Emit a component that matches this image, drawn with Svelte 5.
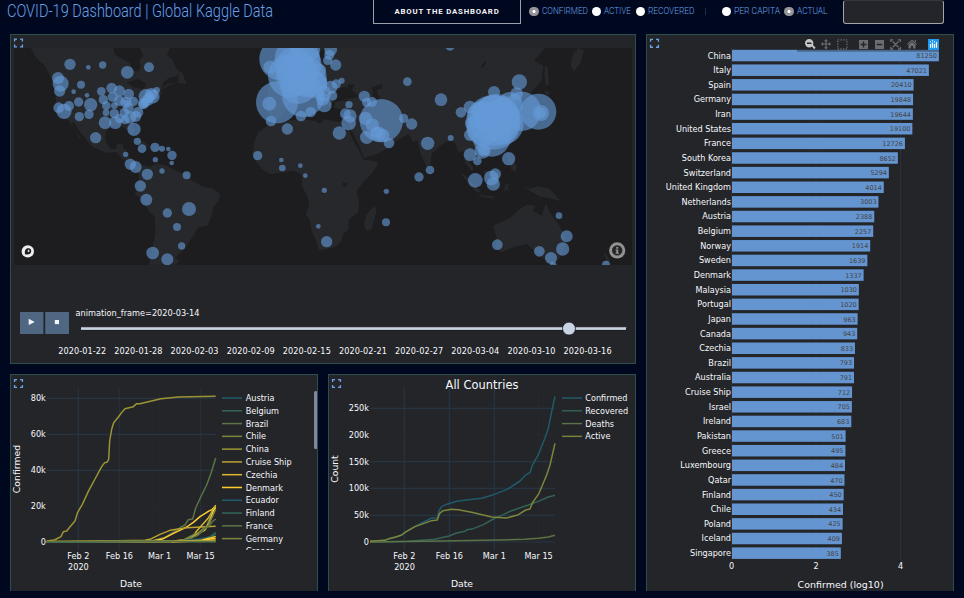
<script>
  const radiosA = [
    { label: 'CONFIRMED', w: 46, on: true },
    { label: 'ACTIVE', w: 27, on: false },
    { label: 'RECOVERED', w: 46.5, on: false }
  ];
  const radiosB = [
    { label: 'PER CAPITA', w: 46, on: false },
    { label: 'ACTUAL', w: 30.5, on: true }
  ];

  const bars = [
    ['China', 81250], ['Italy', 47021], ['Spain', 20410], ['Germany', 19848], ['Iran', 19644],
    ['United States', 19100], ['France', 12726], ['South Korea', 8652], ['Switzerland', 5294],
    ['United Kingdom', 4014], ['Netherlands', 3003], ['Austria', 2388], ['Belgium', 2257],
    ['Norway', 1914], ['Sweden', 1639], ['Denmark', 1337], ['Malaysia', 1030], ['Portugal', 1020],
    ['Japan', 963], ['Canada', 943], ['Czechia', 833], ['Brazil', 793], ['Australia', 791],
    ['Cruise Ship', 712], ['Israel', 705], ['Ireland', 683], ['Pakistan', 501], ['Greece', 495],
    ['Luxembourg', 484], ['Qatar', 470], ['Finland', 450], ['Chile', 434], ['Poland', 425],
    ['Iceland', 409], ['Singapore', 385]
  ];
  const barY = (i) => 55.5 + i * 14.635;
  const barW = (v) => Math.log10(v) * 42.2;

  const dates = ['2020-01-22', '2020-01-28', '2020-02-03', '2020-02-09', '2020-02-15', '2020-02-21', '2020-02-27', '2020-03-04', '2020-03-10', '2020-03-16'];

  const americas = [
    [180,91,17],[235,100,7],[278,93,11],[352,115,19],[417,100,15],[144,132,18],[152,149,24],[149,171,17],[191,173,7],
    [213,152,12],[231,184,7],[206,204,14],[242,212,20],[146,221,16],[162,232,23],[177,216,15],[208,248,14],[237,241,14],
    [274,172,13],[305,162,16],[328,171,17],[356,180,16],[280,197,14],[308,189,15],[289,215,13],[313,215,10],[288,236,10],
    [313,239,14],[328,200,16],[348,205,17],[370,202,14],[355,222,16],[343,236,14],[285,266,19],[316,266,19],[329,254,14],
    [345,258,13],[360,250,19],[377,247,17],[384,235,16],[408,187,22],[401,208,17],[413,199,17],[424,181,19],[428,188,21],
    [440,169,10],[422,189,12],[405,206,14],[350,206,9],[398,212,13],[416,192,16],[372,286,20],[257,311,17],[382,322,11],[396,344,13],[435,340,14],
    [456,344,9],[475,345,7],[486,364,14],[485,387,7],[436,377,8],[347,361,8],[361,391,17],[377,399,18],[456,411,8],
    [412,421,17],[530,424,12],[391,456,17],[409,497,18],[472,537,14],[537,525,21],[501,579,12],[515,636,11],[428,657,19],[472,676,18]
  ];
  const africa = [
    [182,75,64],[232,75,68],[210,125,66],[171,205,63],[232,120,64],[225,100,60],[250,185,64],[250,90,55],[260,130,60],[235,155,55],
    [255,45,45],[280,150,42],[150,100,20],[148,209,21],[153,261,16],[202,285,17],[243,246,16],[272,234,16],[298,109,20],[293,145,28],
    [332,47,19],[328,63,15],[323,79,14],[347,93,17],[313,213,22],[308,195,20],[332,160,20],[349,150,14],[365,140,9],[337,185,15],
    [310,178,24],[300,190,12],[387,212,11],[376,239,16],[390,246,20],[386,267,22],[358,297,20],[433,187,17],[440,205,14],[456,204,15],
    [484,260,65],[436,253,20],[457,273,20],[440,310,20],[474,300,23],[488,304,20],[507,327,16],[470,296,18],[562,143,13],[551,253,14],[575,270,17],
    [623,328,20],[597,429,14],[630,408,13],[499,472,8],[498,565,12],[320,623,17],[295,577,7],[313,469,8],[256,425,7],[241,395,7],
    [187,402,10],[184,378,7],[113,365,14]
  ];
  const asia = [
    [60,36,14],[268,144,23],[192,174,18],[260,179,19],[33,197,19],[93,235,16],[120,219,19],[62,312,9],[120,303,18],[120,362,19],
    [142,381,13],[236,374,20],[275,232,59],[325,233,54],[333,237,24],[333,237,16],[195,260,76],[190,265,82],[185,312,56],[200,250,70],[210,248,55],
    [220,270,61],[240,212,38],[155,245,43],[160,285,50],[125,268,20],[160,235,34],[158,350,24],[160,350,17],[175,250,45],[215,230,40],
    [136,439,22],[184,432,22],[196,420,17],[190,450,20],[387,545,10],[410,607,18],[398,645,20],[328,652,16],[363,672,18],[202,632,16],[528,692,12],[370,694,10]
  ];

  const land = [
    '62,42 75,65 90,83 105,95 115,115 122,130 135,160 138,200 143,228 158,248 178,262 195,290 215,315 207,311 185,270 190,262 208,290 235,325 250,340 290,356 320,355 335,372 360,392 375,402 380,387 362,372 345,357 350,346 340,346 338,328 322,330 318,345 302,345 288,325 285,305 290,288 310,275 340,280 355,290 364,304 372,304 372,280 367,262 385,245 400,225 415,200 440,190 455,180 452,168 475,155 498,146 470,150 455,165 460,145 480,130 495,128 515,118 500,105 485,75 470,65 480,42 390,42 400,65 388,80 392,95 385,112 370,110 360,88 340,75 315,62 310,42',
    '378,402 400,393 420,400 440,388 470,395 500,412 530,420 545,440 580,458 610,465 630,480 625,500 610,520 605,545 592,575 565,580 550,605 530,635 515,652 505,662 495,672 506,678 500,692 417,692 430,630 436,600 435,550 415,530 400,500 375,480 382,455 388,430',
    '505,130 515,110 522,130 530,150 505,148', '370,318 400,322 420,338 405,336 385,325', '428,340 456,342 456,350 430,348',
    '780,272 805,265 870,255 920,262 930,270 945,255 970,262 1000,265 1015,285 1030,320 1045,345 1060,377 1102,382 1104,390 1085,420 1060,445 1040,470 1047,510 1045,535 1017,555 1015,585 1000,600 995,620 975,640 950,645 927,650 920,625 905,590 900,560 888,540 898,510 892,485 875,455 877,430 870,420 850,410 825,415 780,420 755,405 740,385 728,360 732,325 745,295 765,280',
    '1095,515 1100,530 1085,585 1070,591 1062,575 1070,540',
    '820,42 780,120 770,230 800,260 850,200 930,190 960,220 975,195 1000,196 1020,200 1030,222 1010,225 1013,270 1030,300 1050,340 1062,373 1100,360 1130,345 1160,320 1195,300 1210,325 1222,318 1232,360 1250,400 1262,390 1265,360 1290,335 1315,320 1335,325 1345,355 1360,350 1365,385 1385,412 1390,402 1375,375 1395,370 1410,385 1420,360 1500,300 1515,215 1560,180 1595,140 1600,95 1572,80 1605,42',
    '1705,42 1722,50 1710,90 1690,115 1682,90 1690,60', '1605,95 1613,100 1617,150 1608,156 1603,120', '1602,168 1625,176 1608,184',
    '1350,415 1372,428 1412,472 1404,478 1380,455', '1408,482 1455,488 1452,494 1408,487', '1485,452 1502,450 1493,458 1500,475 1490,465 1482,475',
    '1490,350 1505,375 1520,395 1518,413 1505,410 1500,390', '1420,410 1465,410 1470,430 1460,462 1435,455',
    '1540,455 1560,464 1585,456 1620,466 1652,502 1620,492 1590,488 1560,470',
    '1450,575 1500,552 1530,525 1550,512 1575,515 1570,530 1595,545 1608,508 1620,535 1645,570 1662,600 1668,630 1655,665 1635,690 1610,682 1580,655 1550,630 1510,640 1475,655 1458,645 1460,615',
    '1780,655 1792,665 1800,680 1790,692 1778,692 1788,678', '976,203 1005,200 1030,205 1028,218 1000,228 972,222'
  ];
  const lakes = [
    '350,145 385,135 410,150 400,165 370,160', '975,175 1000,158 1015,162 1012,150 1034,152 1025,168 1050,190 1010,194 980,195',
    '1085,160 1115,150 1117,162 1100,168 1112,200 1092,198', '998,445 1012,448 1008,460 998,455', '930,55 942,42 942,80 930,90',
    '1413,100 1425,80 1428,90 1416,102'
  ];

  const palette = ['#1f5b6b', '#336354', '#5c7347', '#7c853c', '#9c9535', '#b9a232', '#dfb430', '#ffcc2f'];
  const countries = ['Austria', 'Belgium', 'Brazil', 'Chile', 'China', 'Cruise Ship', 'Czechia', 'Denmark', 'Ecuador', 'Finland', 'France', 'Germany'];
  const series = [
    ['#9c9535', '125,513 148,510 160,504 168,500 175,485 185,483 197,468 210,453 218,427 232,403 250,364 270,327 290,290 299,278 307,276 311,268 314,213 320,178 326,158 340,141 352,125 360,116 385,110 395,101 405,101 430,95 468,86 520,81 632,79'],
    ['#5c7347', '125,516 430,515 480,502 512,482 530,470 540,465 550,449 563,447 572,414 590,375 605,345 618,310 625,287 632,264'],
    ['#ffcc2f', '125,516 440,514 475,506 510,488 545,471 565,457 585,440 610,424 622,418 632,408'],
    ['#b9a232', '125,516 340,512 420,511 435,508 465,493 495,481 520,477 545,473 632,469'],
    ['#dfb430', '125,516 500,514 550,508 565,498 575,483 592,464 610,444 622,423 632,405'],
    ['#7c853c', '125,516 520,514 560,504 580,488 605,468 620,432 632,410'],
    ['#ffcc2f', '125,516 500,515 550,510 568,496 600,480 614,456 624,425 632,412'],
    ['#7c853c', '125,516 530,513 570,492 590,485 608,470 622,440 632,418'],
    ['#5c7347', '125,516 540,513 580,495 600,475 615,465 622,455 632,447'],
    ['#1f5b6b', '125,516 540,514 590,507 615,500 632,487'],
    ['#1f5b6b', '125,516 530,512 580,508 618,500 632,491'],
    ['#336354', '125,516 560,512 600,508 632,492'],
    ['#ffcc2f', '500,515 590,511 612,505 632,499'],
    ['#ffcc2f', '500,515 590,512 612,508 632,505'],
    ['#dfb430', '500,515 590,513 632,510'],
    ['#9c9535', '125,514 632,513'],
    ['#5c7347', '125,515.5 632,515.5']
  ];
  const totals = [
    ['#336354', '135,516 250,514 330,508 372,498 395,489 420,484 426,479 445,476 475,464 505,447 530,436 560,422 610,405 640,394 670,381 690,376'],
    ['#5c7347', '135,516 350,513 480,511 600,508 640,505 670,501 690,496'],
    ['#1f5b6b', '135,514 180,511 192,506 215,500 230,495 240,487 270,469 320,444 337,443 342,422 350,410 365,403 395,394 430,389 470,385 500,376 545,359 585,333 602,315 615,308 622,286 640,254 660,204 670,175 680,125 690,79'],
    ['#7c853c', '135,514 180,511 192,506 215,500 230,495 240,487 270,470 320,452 337,450 344,430 354,422 380,418 400,419 440,427 500,441 545,444 580,434 602,420 615,417 622,399 642,370 665,315 675,285 690,220']
  ];
  const xTicksA = [[220, 'Feb 2'], [343, 'Feb 16'], [464, 'Mar 1'], [587, 'Mar 15']];
  const yTicksA = [[85, '80k'], [193, '60k'], [301, '40k'], [408, '20k'], [516, '0']];
  const xTicksB = [[238, 'Feb 2'], [373, 'Feb 16'], [508, 'Mar 1'], [641, 'Mar 15']];
  const yTicksB = [[115, '250k'], [195, '200k'], [275, '150k'], [355, '100k'], [436, '50k'], [516, '0']];
</script>

{#snippet radio(r)}
  <label class="radio">
    <i class:on={r.on}></i>
    <svg width={r.w} height="14"><text x="0" y="10.4" font-size="9.6" textLength={r.w} lengthAdjust="spacingAndGlyphs">{r.label}</text></svg>
  </label>
{/snippet}

{#snippet expand(x, y)}
  <path class="expand" transform="translate({x} {y})" d="M.6 3V.6H3M6 .6H8.4V3M8.4 6V8.4H6M3 8.4H.6V6" />
{/snippet}

{#snippet dots(list, dx)}
  {#each list as [x, y, r]}
    <circle cx={x + dx} cy={y} {r} />
  {/each}
{/snippet}

<div class="page">
  <header>
    <svg class="title" width="270" height="24"><text x="0" y="17.2" font-size="17.6" textLength="266" lengthAdjust="spacingAndGlyphs">COVID-19 Dashboard | Global Kaggle Data</text></svg>
    <button class="about">ABOUT THE DASHBOARD</button>
    <div class="radios">{#each radiosA as r}{@render radio(r)}{/each}</div>
    <span class="sep"></span>
    <div class="radios">{#each radiosB as r}{@render radio(r)}{/each}</div>
    <div class="select"></div>
  </header>

  <main>
    <div class="left">
      <section class="panel map">
        <svg viewBox="11 35 624 328" width="624" height="328">
          {@render expand(14, 38.5)}
          <defs><clipPath id="mapclip"><rect x="12" y="42" width="1854" height="651" /></clipPath></defs>
          <g transform="translate(10 34) scale(.33333)">
            <g clip-path="url(#mapclip)">
              <rect x="12" y="42" width="1854" height="651" fill="#1d1d1f" />
              {#each land as p}<polygon points={p} fill="#27282b" />{/each}
              {#each lakes as p}<polygon points={p} fill="#1d1d1f" />{/each}
              <g fill="#6499d6" fill-opacity=".62">
                {@render dots(americas, 0)}
                {@render dots(africa, 630)}
                {@render dots(asia, 1260)}
              </g>
            </g>
          </g>
          <circle cx="27.8" cy="251.4" r="6.2" fill="#eee" />
          <path d="M25 254.3C24.4 250.5 25.5 248.2 28.2 248.2A2.9 2.9 0 0 1 31.2 251.2C31.2 254 28.6 254.9 25 254.3Z" fill="#1d1d1f" />
          <path d="M28.6 249.3l.5 1.1 1.1.5-1.1.5-.5 1.1-.5-1.1-1.1-.5 1.1-.5z" fill="#eee" />
          <circle cx="617.2" cy="250.4" r="8.1" fill="#929293" />
          <circle cx="617.2" cy="250.4" r="5.2" fill="#252526" />
          <path d="M616.2 247h2v1.7h-2zM615.5 249.6h2.7v3.2h.8v1h-3.5v-1h.8v-2.2h-.8z" fill="#929293" />

          <rect x="20" y="312" width="23.4" height="22" rx=".6" fill="#506784" />
          <rect x="45.2" y="312" width="23.8" height="22" rx=".6" fill="#506784" />
          <path d="M28.7 318.8L34.7 321.9 28.7 325Z" fill="#f2f5fa" />
          <rect x="54.8" y="320" width="4.2" height="4.1" fill="#f2f5fa" />
          <text x="75.5" y="315.8" textLength="124" lengthAdjust="spacingAndGlyphs">animation_frame=2020-03-14</text>
          <rect x="81" y="326.8" width="545.3" height="3.6" fill="#15161a" />
          <rect x="81" y="326.9" width="545.3" height="1.2" fill="#8d8e98" />
          <rect x="81" y="327.6" width="545" height="2.3" fill="#c8d4e3" />
          <circle cx="569" cy="328.6" r="6.5" fill="#c8d4e3" stroke="#17181b" stroke-width=".8" />
          {#each dates as d, i}<text x={82.2 + i * 56.15} y="353.9" text-anchor="middle" textLength="48">{d}</text>{/each}
        </svg>
      </section>

      <div class="row">
        <section class="panel chart">
          <svg viewBox="11 375 306 216" width="306" height="216">
            {@render expand(14, 379)}
            <g transform="translate(5 370) scale(.33333)" fill="none">
              {#each xTicksA as [x], i}<path d="M{x} 55V540" class="grid" opacity={i === 0 ? 1 : .65} class:faint={i === 2} />{/each}
              {#each yTicksA as [y]}<path d="M125 {y}H632" class="grid" class:faint={y === 408} />{/each}
              {#each series as [c, p]}<polyline points={p} stroke={c} stroke-width="4.4" stroke-linejoin="round" />{/each}
              {#each countries as _, i}<path d="M651 {84 + i * 38.35}H711" stroke={palette[i % 8]} stroke-width="4.6" />{/each}
            </g>
            {#each xTicksA as [x, t]}<text x={5 + x / 3} y="558.6" text-anchor="middle">{t}</text>{/each}
            <text x="78.4" y="569.5" text-anchor="middle">2020</text>
            {#each yTicksA as [y, t]}<text x="45.8" y={373 + y / 3} text-anchor="end">{t}</text>{/each}
            {#each countries as c, i}<text x="245.7" y={401.1 + i * 12.78}>{c}</text>{/each}
            <clipPath id="legendclip"><rect x="240" y="380" width="78" height="170" /></clipPath>
            <g clip-path="url(#legendclip)"><text x="245.7" y="554.4">Greece</text></g>
            <text class="axis" transform="translate(20.3 469) rotate(-90)" text-anchor="middle" textLength="48.5">Confirmed</text>
            <text class="axis" x="131" y="587" text-anchor="middle">Date</text>
            <rect x="314" y="391" width="3.2" height="58" rx="1.5" fill="#7f87a0" />
          </svg>
        </section>
        <section class="panel chart">
          <svg viewBox="329 375 306 216" width="306" height="216">
            {@render expand(332, 379)}
            <g transform="translate(325 370) scale(.33333)" fill="none">
              {#each xTicksB as [x], i}<path d="M{x} 55V540" class="grid" class:faint={i === 3} />{/each}
              {#each yTicksB as [y]}<path d="M135 {y}H690" class="grid" class:faint={y === 195} />{/each}
              {#each totals as [c, p]}<polyline points={p} stroke={c} stroke-width="4.5" stroke-linejoin="round" />{/each}
              {#each [0, 1, 2, 3] as i}<path d="M711 {84 + i * 38.35}H771" stroke={palette[i]} stroke-width="4.3" />{/each}
            </g>
            <text x="482" y="389.4" text-anchor="middle" style="font-size:11.4px" textLength="72.8">All Countries</text>
            {#each xTicksB as [x, t]}<text x={325 + x / 3} y="558.6" text-anchor="middle">{t}</text>{/each}
            <text x="404.5" y="569.5" text-anchor="middle">2020</text>
            {#each yTicksB as [y, t]}<text x="369" y={373 + y / 3} text-anchor="end">{t}</text>{/each}
            {#each ['Confirmed', 'Recovered', 'Deaths', 'Active'] as c, i}<text x="585.3" y={401.1 + i * 12.78}>{c}</text>{/each}
            <text class="axis" transform="translate(338.3 469) rotate(-90)" text-anchor="middle">Count</text>
            <text class="axis" x="462" y="587" text-anchor="middle">Date</text>
          </svg>
        </section>
      </div>
    </div>

    <section class="panel bars">
      <svg viewBox="647 35 306 556" width="306" height="556">
        {@render expand(650, 38.8)}
        <path d="M731.5 48V560M816 50V560M900.5 50V560" class="vgrid" />
        {#each bars as [name, v], i}
          <text x="731" y={barY(i) + 3} text-anchor="end">{name}</text>
          <rect x="732" y={barY(i) - 5.7} width={barW(v) - .3} height="11.5" fill="#6495d0" />
          <text class="val" x={729.8 + barW(v)} y={barY(i) + 2.6} text-anchor="end">{v}</text>
        {/each}
        <rect x="797" y="48.5" width="142" height="3.2" fill="#242529" opacity=".42" />
        <text x="731.7" y="569.2" text-anchor="middle">0</text>
        <text x="816.2" y="569.2" text-anchor="middle">2</text>
        <text x="900.7" y="569.2" text-anchor="middle">4</text>
        <text class="axis" x="840.6" y="587.6" text-anchor="middle" textLength="86" lengthAdjust="spacingAndGlyphs">Confirmed (log10)</text>
        <g fill="#6c6d72">
          <g fill="#c4c5c7"><path fill-rule="evenodd" d="M809.2 39a4.2 4.2 0 1 0 0 8.4 4.2 4.2 0 0 0 0-8.4zM807 42.5h4.4v1.4H807z" /><path d="M811.3 45.7l1.3-1.3 3 3.4-1.4 1.4z" /></g>
          <path d="M826 39l2 2.2h-1.4v2.2h2.3V42l2.2 2-2.2 2v-1.4h-2.3v2.6h1.4l-2 2.2-2-2.2h1.4v-2.6h-2.3V46l-2.2-2 2.2-2v1.4h2.3v-2.2H824z" />
          <rect x="837.8" y="39.8" width="9.2" height="9.2" fill="none" stroke="#6c6d72" stroke-width="1.3" stroke-dasharray="1.2 1.45" />
          <path fill-rule="evenodd" d="M859 40h9v9h-9zM862.8 41.5v2.3h-2.3v1.4h2.3v2.3h1.4v-2.3h2.3v-1.4h-2.3v-2.3z" />
          <path fill-rule="evenodd" d="M875 40h9v9h-9zM876.7 43.8v1.4h5.6v-1.4z" />
          <path d="M890.8 42v-2.2h2.4M898 39.8h2.4V42M900.4 46.8V49H898M893.2 49h-2.4v-2.2M892.7 41.5l5.8 5.8M898.5 41.5l-5.8 5.8" fill="none" stroke="#6c6d72" stroke-width="1.3" />
          <path d="M912 39.6l5 4.5-.7.7-4.3-3.9-4.3 3.9-.7-.7zM914.7 40h1.3v2.3l-1.3-1.1zM908.5 44.8l3.5-3.1 3.5 3.1v3.8H913v-2.5h-2v2.5h-2.5z" />
        </g>
        <rect x="928" y="39" width="11" height="11" fill="#2199ef" />
        <path d="M930.5 44v3.8M932.5 42.8v5M934.5 44v3.8M936.5 42v5.8" stroke="#fff" stroke-width="1.2" />
        <path d="M930 41.8h1M932 40.8h1M934 41.8h1" stroke="#fff" />
      </svg>
    </section>
  </main>
</div>

<style>
  :global(body) { margin: 0; background: #000820; }
  .page { width: 964px; height: 598px; overflow: hidden; background: #000820; font-family: "DejaVu Sans", sans-serif; }
  header { height: 34px; display: flex; align-items: flex-start; padding-left: 7px; box-sizing: border-box; }
  header svg { display: block; flex: none; overflow: visible; }
  header text { font-family: Roboto, sans-serif; font-weight: 300; fill: #6aa0e4; }
  .title { margin-right: 96px; }
  .about {
    width: 148px; height: 24px; box-sizing: border-box; flex: none; padding: 1px 0 0; margin: 0 8px 0 0;
    border: 1px solid #9da0a8; border-top: 0; border-radius: 0; background: #000820; color: #f4f4f4;
    font: 700 7.8px/22px Roboto, sans-serif; letter-spacing: .8px; white-space: nowrap;
  }
  .radios { display: flex; gap: 4.2px; padding-top: 4px; flex: none; }
  .radio { display: flex; align-items: flex-start; gap: 3px; }
  .radio i { width: 9.6px; height: 9.6px; flex: none; margin-top: 2.7px; border-radius: 50%; background: #fff; box-sizing: border-box; }
  .radio i.on { background: radial-gradient(circle, #fff 0 1.2px, #96969a 1.9px); }
  .sep { width: 1px; height: 7px; margin: 8px 16px 0 10px; background: #1d2c4b; flex: none; }
  .select { width: 101px; height: 24px; box-sizing: border-box; flex: none; margin-left: auto; margin-right: 20px; border: 1px solid #a5a5a7; border-top-color: #35363c; border-radius: 3px; background: #24252b; }
  main { display: flex; gap: 10px; padding-left: 10px; }
  .left { display: flex; flex-direction: column; gap: 10px; width: 626px; }
  .row { display: flex; gap: 10px; }
  .panel { box-sizing: border-box; background: #242529; border: 1px solid #2d4d4f; overflow: hidden; }
  .panel svg { display: block; }
  .map { height: 330px; }
  .chart { width: 308px; height: 217px; border-bottom: 0; }
  .bars { width: 308px; height: 557px; border-bottom: 0; }
  .panel text { font-size: 8.15px; fill: #f7f9fd; }
  .panel text.axis { font-size: 9.25px; }
  .panel text.val { font-size: 6.5px; fill: #444; }
  .expand { fill: none; stroke: #6ba2e6; stroke-width: 1.35; }
  .grid { stroke: #263544; stroke-width: 3.4; }
  .grid.faint { stroke: #292c33; stroke-width: 2; }
  .vgrid { stroke: #2b313d; stroke-width: .9; }
</style>
